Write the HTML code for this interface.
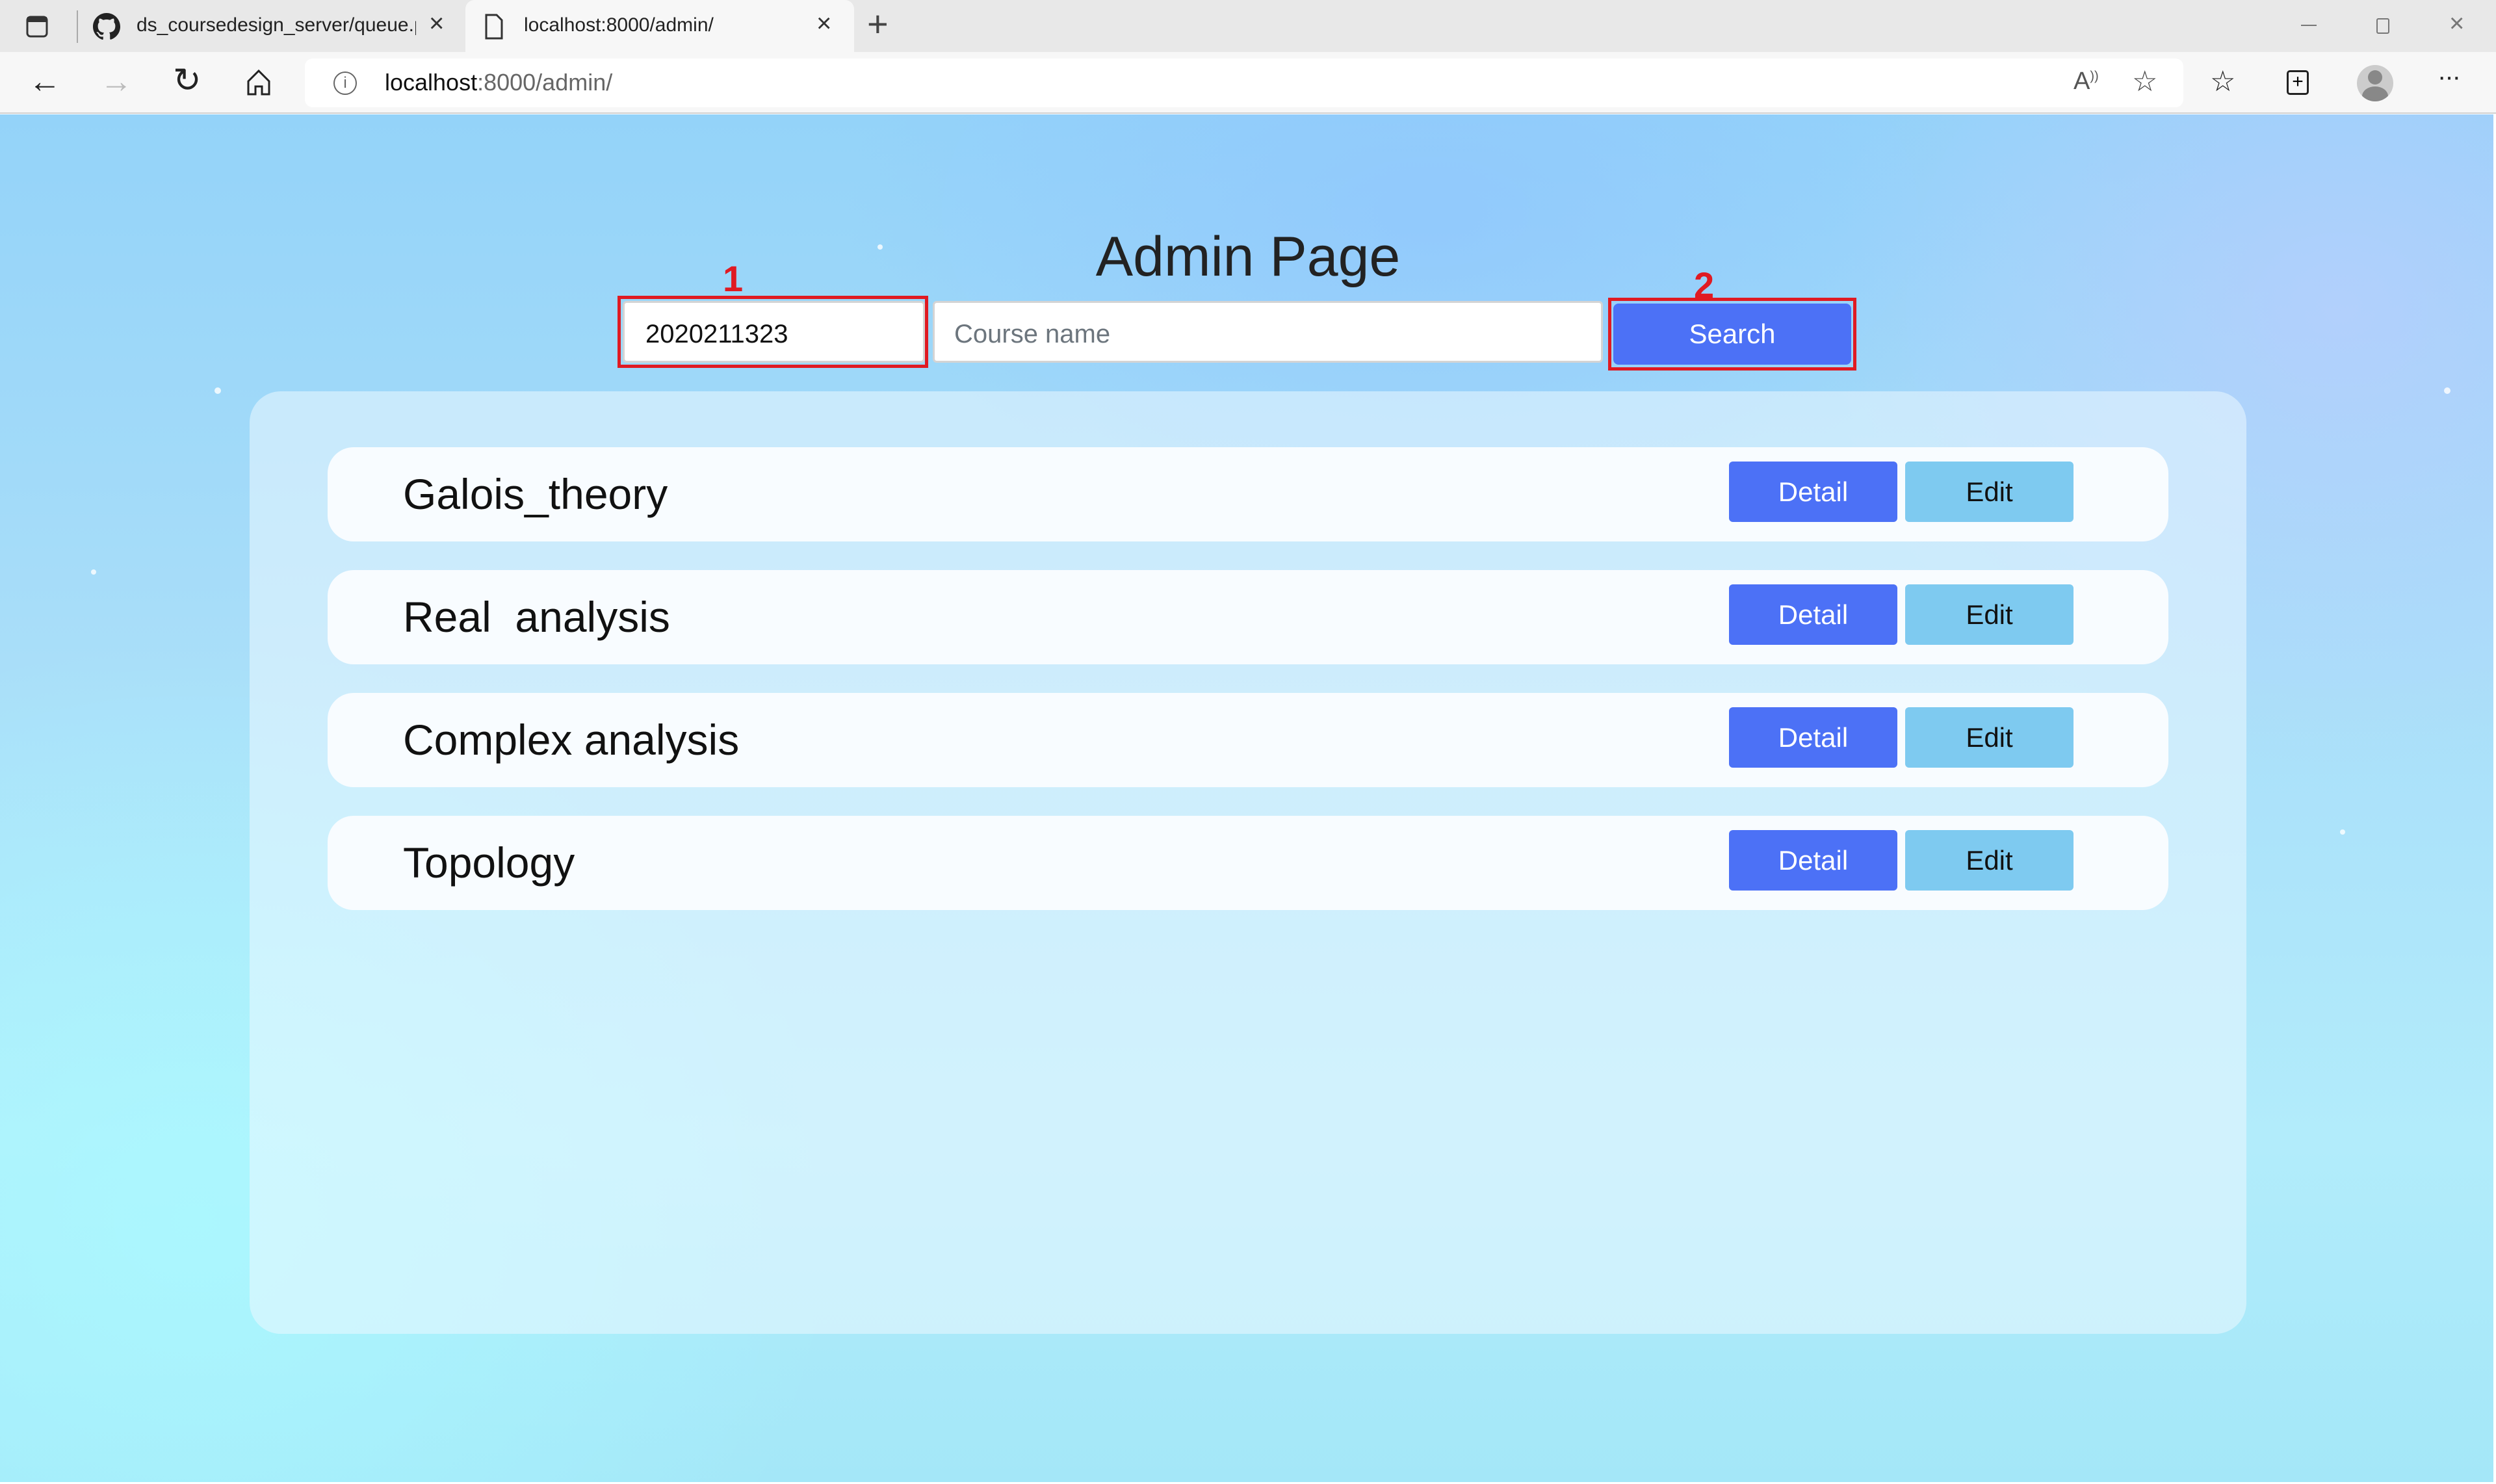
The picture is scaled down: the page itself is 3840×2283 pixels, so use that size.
<!DOCTYPE html>
<html><head><meta charset="utf-8"><style>
*{margin:0;padding:0;box-sizing:border-box}
body{width:3840px;height:2283px;overflow:hidden;font-family:"Liberation Sans",sans-serif;background:#fff;position:relative}
.abs{position:absolute}
#tabs{left:0;top:0;width:3840px;height:80px;background:#e8e8e8}
#tb{left:0;top:80px;width:3840px;height:95px;background:#f7f7f7;border-bottom:2px solid #d0d0d0}
#page{left:0;top:176px;width:3836px;height:2104px;overflow:hidden;
background:radial-gradient(ellipse 900px 500px at 2200px 150px,rgba(140,190,255,.5),transparent),
radial-gradient(ellipse 800px 700px at 3600px 300px,rgba(200,200,255,.5),transparent),
radial-gradient(ellipse 1000px 900px at 300px 1700px,rgba(170,250,255,.8),transparent),
linear-gradient(180deg,#94d3f9 0%,#a9def9 40%,#b2ecfb 75%,#a4e7f8 100%)}
.t{font-size:30px;color:#222}
#panel{left:384px;top:426px;width:3072px;height:1450px;background:rgba(235,248,255,.55);border-radius:48px}
.row{position:absolute;left:120px;width:2832px;height:145px;background:#f8fcff;border-radius:40px}
.row span{position:absolute;left:116px;top:34px;font-size:66px;color:#111}
.btn{position:absolute;top:22px;width:259px;height:93px;border-radius:6px;font-size:42px;text-align:center;line-height:93px}
.d{left:2156px;background:#4c71f6;color:#fff}
.e{left:2427px;background:#7ecaf0;color:#111}
.dot{position:absolute;background:#fff;border-radius:50%;opacity:.8}
</style></head><body>
<div id="tabs" class="abs">
 <svg class="abs" style="left:40px;top:24px" width="34" height="34" viewBox="0 0 34 34"><rect x="2" y="2" width="30" height="30" rx="5" fill="none" stroke="#333" stroke-width="3"/><rect x="2" y="2" width="30" height="8" fill="#333"/></svg>
 <div class="abs" style="left:118px;top:16px;width:2px;height:50px;background:#aaa"></div>
 <svg class="abs" style="left:143px;top:20px" width="42" height="42" viewBox="0 0 16 16"><path fill="#222" d="M8 0C3.6 0 0 3.6 0 8c0 3.5 2.3 6.5 5.5 7.6.4.1.5-.2.5-.4v-1.4c-2.2.5-2.7-1-2.7-1-.4-.9-.9-1.200-.9-1.2-.7-.5.1-.5.1-.5.8.1 1.2.8 1.2.8.7 1.3 1.9.9 2.3.7.1-.5.3-.9.5-1.1-1.8-.2-3.600-.9-3.6-4 0-.9.3-1.6.8-2.1-.1-.2-.4-1 .1-2.1 0 0 .7-.2 2.2.8.6-.2 1.3-.3 2-.3s1.4.1 2 .3c1.5-1 2.2-.8 2.2-.8.4 1.1.2 1.9.1 2.1.5.6.8 1.3.8 2.1 0 3.1-1.9 3.7-3.6 3.9.3.3.5.8.5 1.5v2.2c0 .2.1.5.6.4C13.7 14.5 16 11.5 16 8c0-4.4-3.6-8-8-8z"/></svg>
 <div class="abs t" style="left:210px;top:22px;width:430px;overflow:hidden;white-space:nowrap">ds_coursedesign_server/queue.py</div>
 <div class="abs" style="left:660px;top:14px;font-size:40px;color:#333">×</div>
 <div class="abs" style="left:716px;top:0;width:598px;height:80px;background:#f7f7f7;border-radius:14px 14px 0 0"></div>
 <svg class="abs" style="left:745px;top:20px" width="30" height="42" viewBox="0 0 30 42"><path d="M3 3h16l8 8v28H3z" fill="none" stroke="#333" stroke-width="3"/></svg>
 <div class="abs t" style="left:806px;top:22px">localhost:8000/admin/</div>
 <div class="abs" style="left:1256px;top:14px;font-size:40px;color:#333">×</div>
 <div class="abs" style="left:1334px;top:4px;font-size:56px;color:#444;font-weight:300">+</div>
 <div class="abs" style="left:3540px;top:38px;width:24px;height:2px;background:#777"></div>
 <div class="abs" style="left:3656px;top:28px;width:20px;height:24px;border:2px solid #777;border-radius:3px"></div>
 <div class="abs" style="left:3768px;top:14px;font-size:40px;color:#777">×</div>
</div>
<div id="tb" class="abs">
 <div class="abs" style="left:44px;top:16px;font-size:50px;color:#222">←</div>
 <div class="abs" style="left:154px;top:16px;font-size:50px;color:#bbb">→</div>
 <div class="abs" style="left:266px;top:14px;font-size:52px;color:#222">↻</div>
 <svg class="abs" style="left:378px;top:25px" width="40" height="44" viewBox="0 0 40 44"><path d="M4 20L20 4l16 16v20H25V28h-10v12H4z" fill="none" stroke="#222" stroke-width="3"/></svg>
 <div class="abs" style="left:469px;top:10px;width:2890px;height:75px;background:#fff;border-radius:12px"></div>
 <div class="abs" style="left:513px;top:30px;width:36px;height:36px;border:2px solid #666;border-radius:50%;font-size:24px;text-align:center;line-height:32px;color:#666">i</div>
 <div class="abs" style="left:592px;top:26px;font-size:36px;color:#111">localhost<span style="color:#666">:8000/admin/</span></div>
 <div class="abs" style="left:3190px;top:24px;font-size:38px;color:#555">A<sup style="font-size:20px">))</sup></div>
 <div class="abs" style="left:3280px;top:20px;font-size:44px;color:#444">☆</div>
 <div class="abs" style="left:3400px;top:20px;font-size:44px;color:#222">☆</div>
 <div class="abs" style="left:3518px;top:28px;width:34px;height:38px;border:3px solid #222;border-radius:5px;text-align:center;font-size:30px;line-height:30px">+</div>
 <div class="abs" style="left:3626px;top:20px;width:56px;height:56px;border-radius:50%;background:#ccc;overflow:hidden"><div style="margin:8px auto 0;width:22px;height:22px;border-radius:50%;background:#888"></div><div style="margin:3px auto 0;width:40px;height:30px;border-radius:50%;background:#888"></div></div>
 <div class="abs" style="left:3750px;top:16px;font-size:40px;color:#222;letter-spacing:-2px">···</div>
</div>
<div id="page" class="abs">
 <div class="dot" style="left:330px;top:420px;width:10px;height:10px"></div>
 <div class="dot" style="left:1350px;top:200px;width:8px;height:8px"></div>
 <div class="dot" style="left:3760px;top:420px;width:10px;height:10px"></div>
 <div class="dot" style="left:140px;top:700px;width:8px;height:8px"></div>
 <div class="dot" style="left:3600px;top:1100px;width:8px;height:8px"></div>
 <div class="abs" style="left:0;width:3840px;top:170px;text-align:center;font-size:86px;color:#222">Admin Page</div>
 <div class="abs" style="left:1112px;top:220px;font-size:56px;color:#e01a22;font-weight:bold">1</div>
 <div class="abs" style="left:2606px;top:230px;font-size:56px;color:#e01a22;font-weight:bold">2</div>
 <div class="abs" style="left:950px;top:279px;width:478px;height:111px;border:5px solid #e01a22"></div>
 <div class="abs" style="left:958px;top:287px;width:465px;height:95px;background:#fff;border:3px solid #d4d4d4;border-radius:6px;font-size:40px;color:#111;padding:26px 0 0 32px">2020211323</div>
 <div class="abs" style="left:1435px;top:287px;width:1031px;height:95px;background:#fff;border:3px solid #d4d4d4;border-radius:6px;font-size:40px;color:#6c757d;padding:26px 0 0 30px">Course name</div>
 <div class="abs" style="left:2474px;top:282px;width:382px;height:112px;border:5px solid #e01a22"></div>
 <div class="abs" style="left:2482px;top:291px;width:366px;height:94px;background:#4c71f6;border-radius:8px;font-size:42px;color:#fff;text-align:center;line-height:94px">Search</div>
 <div id="panel" class="abs">
  <div class="row" style="top:86px"><span>Galois_theory</span><div class="btn d">Detail</div><div class="btn e">Edit</div></div>
  <div class="row" style="top:275px"><span>Real&nbsp; analysis</span><div class="btn d">Detail</div><div class="btn e">Edit</div></div>
  <div class="row" style="top:464px"><span>Complex analysis</span><div class="btn d">Detail</div><div class="btn e">Edit</div></div>
  <div class="row" style="top:653px"><span>Topology</span><div class="btn d">Detail</div><div class="btn e">Edit</div></div>
 </div>
</div>
</body></html>
